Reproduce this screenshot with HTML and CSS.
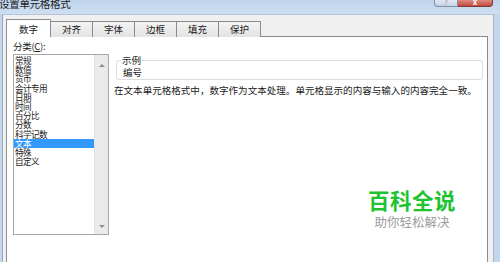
FILE: index.html
```html
<!DOCTYPE html>
<html lang="zh-CN">
<head>
  <meta charset="UTF-8">
  <title>设置单元格格式</title>
  <link rel="stylesheet" href="styles.css">
</head>
<body>
  <div class="window">
    <div class="titlebar">
      <span class="title">设置单元格格式</span>
      <div class="win-buttons">
        <span class="btn-help">?</span>
        <span class="btn-close">x</span>
      </div>
    </div>
    <div class="dialog">
      <div class="tabs">
        <div class="tab active">数字</div>
        <div class="tab">对齐</div>
        <div class="tab">字体</div>
        <div class="tab">边框</div>
        <div class="tab">填充</div>
        <div class="tab">保护</div>
      </div>
      <div class="panel">
        <div class="category">
          <div class="label">分类(<u>C</u>):</div>
          <div class="listbox">
            <ul class="items">
              <li>常规</li>
              <li>数值</li>
              <li>货币</li>
              <li>会计专用</li>
              <li>日期</li>
              <li>时间</li>
              <li>百分比</li>
              <li>分数</li>
              <li>科学记数</li>
              <li class="selected">文本</li>
              <li>特殊</li>
              <li>自定义</li>
            </ul>
            <div class="scrollbar">
              <span class="arrow up"></span>
              <span class="arrow down"></span>
            </div>
          </div>
        </div>
        <div class="details">
          <fieldset class="sample">
            <legend>示例</legend>
            <div class="sample-value">编号</div>
          </fieldset>
          <p class="desc">在文本单元格格式中，数字作为文本处理。单元格显示的内容与输入的内容完全一致。</p>
        </div>
        <div class="watermark">
          <div class="wm-title">百科全说</div>
          <div class="wm-sub">助你轻松解决</div>
        </div>
      </div>
    </div>
  </div>
</body>
</html>
```

FILE: styles.css
```css
body {
  margin: 0;
  width: 500px;
  height: 262px;
  overflow: hidden;
  background: #c2d6ee;
  font-family: "Noto Sans CJK SC", "DejaVu Sans", sans-serif;
  color: #1a1a1a;
}

.window {
  display: flex;
  flex-direction: column;
  height: 262px;
}

.titlebar {
  height: 14px;
  display: flex;
  justify-content: space-between;
  background: linear-gradient(#bed3ec, #cfdff2);
}

.title {
  font-size: 10.5px;
  line-height: 14px;
  margin-top: -3px;
  margin-left: -1px;
  color: #222;
  letter-spacing: -0.3px;
}

.win-buttons {
  display: flex;
  margin-right: 7px;
  height: 7px;
}

.btn-help {
  width: 22px;
  border: 1px solid #7f8fa6;
  border-top: none;
  border-radius: 0 0 0 4px;
  background: linear-gradient(#e2e9f3, #c5d2e3);
  color: #8895a8;
  font-size: 7px;
  line-height: 4px;
  text-align: center;
  overflow: hidden;
}

.btn-close {
  width: 34px;
  border: 1px solid #7d3a35;
  border-top: none;
  border-left: none;
  border-radius: 0 0 4px 0;
  background: linear-gradient(#d98a80, #c44a3b);
  color: #fff;
  font-size: 8px;
  line-height: 3px;
  font-weight: bold;
  text-align: center;
  overflow: hidden;
}

.dialog {
  flex: 1;
  margin: 0 6px 0 2px;
  border-left: 1px solid #9aa8ba;
  border-right: 1px solid #a9b6c6;
  border-top: 1px solid #b4c3d6;
  background: #f0f0f0;
  padding: 5px 5px 0 3px;
  display: flex;
  flex-direction: column;
}

.tabs {
  display: flex;
  align-items: flex-end;
  height: 17px;
  margin-bottom: -1px;
  position: relative;
  z-index: 1;
}

.tab {
  width: 41px;
  height: 15px;
  border: 1px solid #898c95;
  border-bottom: none;
  border-left: none;
  background: linear-gradient(#f3f3f3, #e3e3e3);
  font-size: 9.5px;
  line-height: 15px;
  text-align: center;
}

.tab.active {
  width: 43px;
  height: 17px;
  border-left: 1px solid #898c95;
  background: #fff;
  line-height: 19px;
}

.panel {
  flex: 1;
  position: relative;
  background: #fff;
  border: 1px solid #898c95;
  border-bottom: none;
  display: flex;
  gap: 6px;
  padding: 4px 0 0 6px;
}

.category {
  display: flex;
  flex-direction: column;
}

.label {
  font-size: 9.5px;
  line-height: 11px;
  height: 13px;
  letter-spacing: -0.3px;
}

.listbox {
  width: 94px;
  height: 179px;
  border: 1px solid #a5a8ad;
  display: flex;
}

.items {
  flex: 1;
  list-style: none;
  margin: 0;
  padding: 1px 0 0 0;
}

.items li {
  font-size: 8.6px;
  height: 9.2px;
  line-height: 9.2px;
  padding-left: 1px;
  letter-spacing: -0.6px;
  white-space: nowrap;
}

.items li.selected {
  background: #3399ff;
  color: #fff;
}

.scrollbar {
  width: 13px;
  background: #eaeaea;
  border-left: 1px solid #e2e2e2;
  display: flex;
  flex-direction: column;
  justify-content: space-between;
  align-items: center;
  padding: 9px 0 6px;
}

.arrow {
  width: 0;
  height: 0;
  border-left: 3px solid transparent;
  border-right: 3px solid transparent;
}

.arrow.up {
  border-bottom: 3px solid #8c8c8c;
}

.arrow.down {
  border-top: 3px solid #8c8c8c;
}

.details {
  flex: 1;
  display: flex;
  flex-direction: column;
  margin-right: 4px;
}

.sample {
  margin: 14px 0 0 1px;
  padding: 0 6px 2px;
  border: 1px solid #dcdcdc;
  border-radius: 3px;
}

.sample legend {
  font-size: 9.5px;
  line-height: 10px;
  padding: 0 1px;
  margin-left: -2px;
}

.sample-value {
  font-size: 9.5px;
  line-height: 10px;
  margin-top: 2px;
}

.desc {
  margin: 4px 0 0 -1px;
  font-size: 9.55px;
  line-height: 12px;
  letter-spacing: 0;
  white-space: nowrap;
}

.watermark {
  position: absolute;
  left: 359px;
  top: 150px;
  text-align: center;
  width: 92px;
}

.wm-title {
  font-size: 21.5px;
  font-weight: bold;
  line-height: 26px;
  color: #1ec331;
  letter-spacing: 0.5px;
}

.wm-sub {
  font-size: 12.5px;
  line-height: 16px;
  color: #9a9a9a;
  margin-top: 1px;
}
```
